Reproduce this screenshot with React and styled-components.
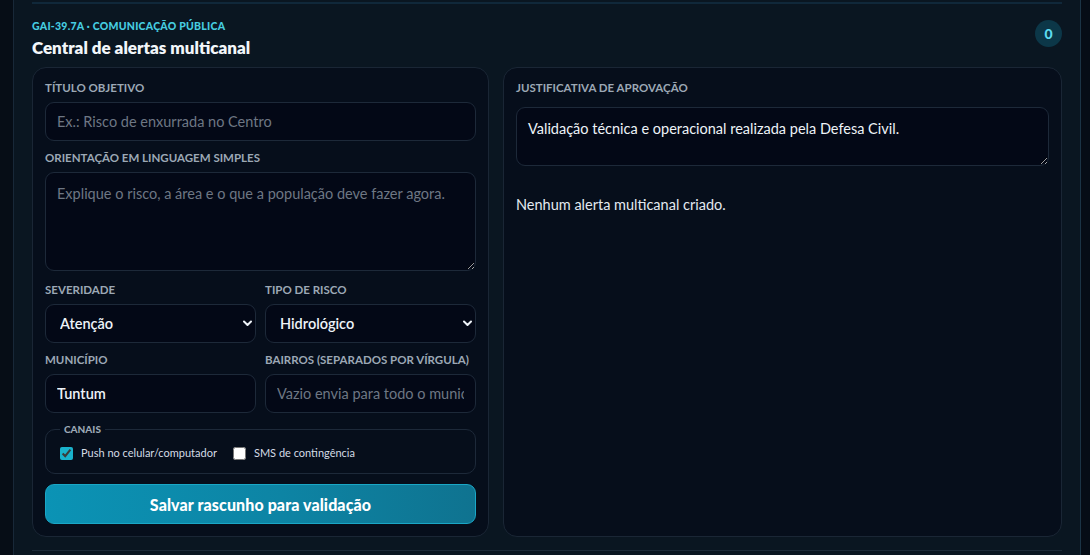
import React from "react";
import styled, { createGlobalStyle } from "styled-components";

const GlobalStyle = createGlobalStyle`
  html, body {
    margin: 0;
    padding: 0;
    background: #060d16;
    font-family: Lato, "Noto Sans", sans-serif;
    color: #e6edf5;
  }
  * { box-sizing: border-box; }
`;

const Shell = styled.div`
  padding: 0 9px 0 13px;
  height: 555px;
  overflow: hidden;
`;

const Panel = styled.main`
  height: 100%;
  background: #0a1621;
  border-left: 1px solid #182838;
  border-right: 1px solid #1b3445;
  padding: 2px 18px 0;
`;

const Section = styled.section`
  border-top: 2px solid #10283a;
  border-bottom: 1px solid #1c2a38;
  padding: 15px 0 13px;
`;

const Header = styled.header`
  display: flex;
  justify-content: space-between;
  align-items: flex-start;
  margin-bottom: 9px;
`;

const Eyebrow = styled.p`
  margin: 0 0 5px;
  font-size: 10.5px;
  line-height: 14px;
  font-weight: 900;
  letter-spacing: 0.25px;
  text-transform: uppercase;
  color: #46cde0;
`;

const Title = styled.h2`
  margin: 0;
  font-size: 17px;
  line-height: 20px;
  font-weight: 800;
  color: #f2f6fa;
`;

const Badge = styled.span`
  margin-top: 1px;
  width: 27px;
  height: 27px;
  border-radius: 50%;
  background: #0c3748;
  color: #5ddcf0;
  font-size: 14px;
  font-weight: 900;
  display: grid;
  place-items: center;
`;

const Columns = styled.div`
  display: grid;
  grid-template-columns: 457px 1fr;
  gap: 14px;
`;

const Card = styled.div`
  background: #060e1b;
  border: 1px solid #1a2635;
  border-radius: 14px;
  padding: 13px 12px 12px;
  display: flex;
  flex-direction: column;
  gap: ${(p) => p.$gap ?? 10}px;
  min-height: 468px;
`;

const Field = styled.label`
  display: flex;
  flex-direction: column;
  gap: 7px;
  min-width: 0;
`;

const Label = styled.span`
  font-size: 11.5px;
  line-height: 14px;
  font-weight: 700;
  text-transform: uppercase;
  color: #9ca8b5;
  white-space: nowrap;
`;

const controlBase = `
  display: block;
  width: 100%;
  background: #030816;
  border: 1px solid #1d2939;
  border-radius: 9px;
  color: #eef3f8;
  font-family: Lato, "Noto Sans", sans-serif;
  font-size: 14.5px;
  outline: none;
  &::placeholder { color: #6e7784; }
`;

const Input = styled.input`
  ${controlBase}
  height: 39px;
  padding: 0 11px;
  font-weight: ${(p) => (p.$strong ? 600 : 400)};
`;

const TextArea = styled.textarea`
  ${controlBase}
  height: ${(p) => p.$h}px;
  padding: 11px 11px;
  resize: vertical;
  line-height: 20px;
  margin-top: ${(p) => p.$mt || 0}px;
  margin-bottom: ${(p) => p.$mb || 0}px;
`;

const Row = styled.div`
  display: grid;
  grid-template-columns: 1fr 1fr;
  gap: 9px;
`;

const SelectWrap = styled.div`
  position: relative;
  height: 39px;
  svg {
    position: absolute;
    right: 4px;
    top: 16px;
    pointer-events: none;
  }
`;

const Select = styled.select`
  ${controlBase}
  appearance: none;
  height: 39px;
  padding: 0 24px 0 14px;
  font-weight: 600;
`;

const Channels = styled.fieldset`
  margin: 0;
  border: 1px solid #1d2939;
  border-radius: 10px;
  padding: 11px 14px 13px;
  display: flex;
  gap: 16px;
  align-items: center;
`;

const Legend = styled.legend`
  padding: 0 4px;
  font-size: 10px;
  line-height: 12px;
  font-weight: 900;
  text-transform: uppercase;
  color: #9ca8b5;
`;

const Check = styled.label`
  display: flex;
  align-items: center;
  gap: 8px;
  font-size: 11px;
  line-height: 14px;
  color: #d4dce5;
  input {
    margin: 0;
    width: 13px;
    height: 13px;
    accent-color: #19b2cc;
  }
`;

const Button = styled.button`
  height: 40px;
  border: 1px solid #1aa7c6;
  border-radius: 9px;
  background: linear-gradient(90deg, #0b93b5 0%, #0d84a4 55%, #0f7390 100%);
  color: #ffffff;
  font-family: Lato, "Noto Sans", sans-serif;
  font-size: 16px;
  font-weight: 900;
  letter-spacing: 0.1px;
  cursor: pointer;
`;

const Empty = styled.p`
  margin: ${(p) => p.$mt}px 0 0;
  font-size: 14.5px;
  line-height: 20px;
  color: #e3e9f0;
`;

const Chevron = () => (
  <svg width="9" height="7" viewBox="0 0 9 7" fill="none">
    <path d="M1 1.5 L4.5 5 L8 1.5" stroke="#eef3f8" strokeWidth="2" strokeLinecap="round" strokeLinejoin="round" />
  </svg>
);

export default function App() {
  return (
    <>
      <GlobalStyle />
      <Shell>
        <Panel>
          <Section>
            <Header>
              <div>
                <Eyebrow>GAI-39.7A · Comunicação pública</Eyebrow>
                <Title>Central de alertas multicanal</Title>
              </div>
              <Badge>0</Badge>
            </Header>

            <Columns>
              <Card>
                <Field>
                  <Label>Título objetivo</Label>
                  <Input placeholder="Ex.: Risco de enxurrada no Centro" />
                </Field>
                <Field>
                  <Label>Orientação em linguagem simples</Label>
                  <TextArea
                    $h={99}
                    $mb={2}
                    placeholder="Explique o risco, a área e o que a população deve fazer agora."
                  />
                </Field>
                <Row>
                  <Field>
                    <Label>Severidade</Label>
                    <SelectWrap>
                      <Select defaultValue="atencao">
                        <option value="atencao">Atenção</option>
                        <option value="alerta">Alerta</option>
                      </Select>
                      <Chevron />
                    </SelectWrap>
                  </Field>
                  <Field>
                    <Label>Tipo de risco</Label>
                    <SelectWrap>
                      <Select defaultValue="hidro">
                        <option value="hidro">Hidrológico</option>
                        <option value="geo">Geológico</option>
                      </Select>
                      <Chevron />
                    </SelectWrap>
                  </Field>
                </Row>
                <Row>
                  <Field>
                    <Label>Município</Label>
                    <Input $strong defaultValue="Tuntum" />
                  </Field>
                  <Field>
                    <Label>Bairros (separados por vírgula)</Label>
                    <Input placeholder="Vazio envia para todo o município" />
                  </Field>
                </Row>
                <Channels>
                  <Legend>Canais</Legend>
                  <Check>
                    <input type="checkbox" defaultChecked />
                    Push no celular/computador
                  </Check>
                  <Check>
                    <input type="checkbox" />
                    SMS de contingência
                  </Check>
                </Channels>
                <Button>Salvar rascunho para validação</Button>
              </Card>

              <Card $gap={0}>
                <Field>
                  <Label>Justificativa de aprovação</Label>
                  <TextArea
                    $h={59}
                    $mt={5}
                    defaultValue="Validação técnica e operacional realizada pela Defesa Civil."
                  />
                </Field>
                <Empty $mt={29}>Nenhum alerta multicanal criado.</Empty>
              </Card>
            </Columns>
          </Section>
        </Panel>
      </Shell>
    </>
  );
}
